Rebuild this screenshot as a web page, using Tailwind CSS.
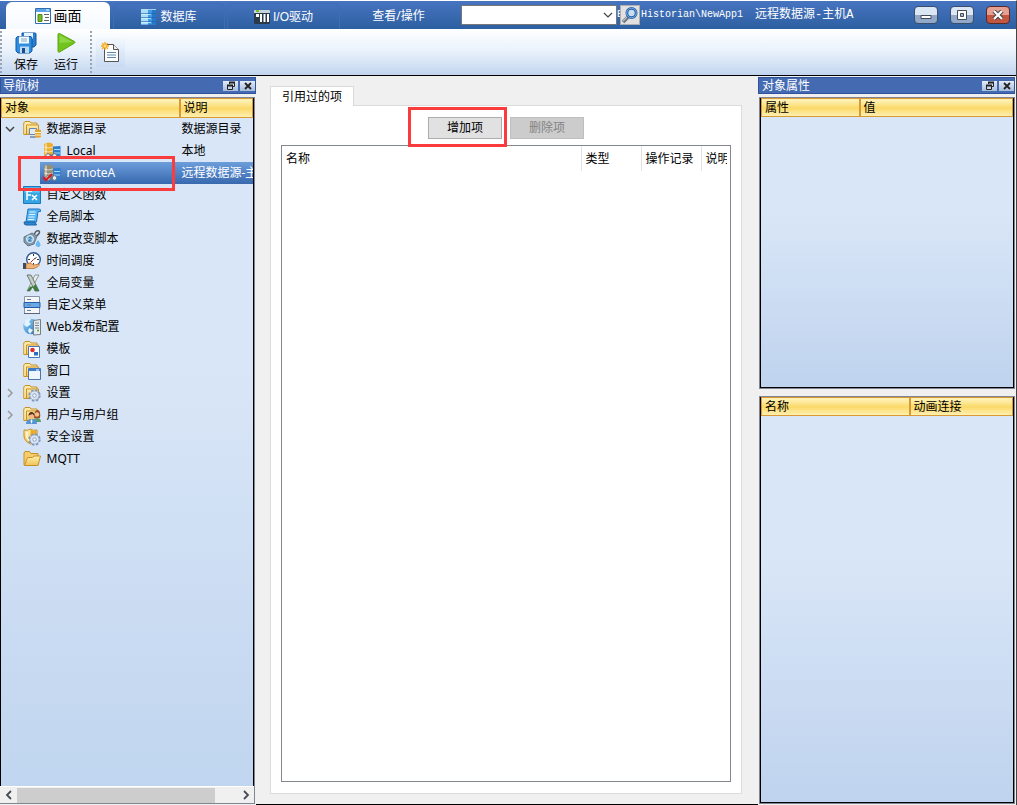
<!DOCTYPE html>
<html lang="zh-CN">
    <head>
        <meta charset="UTF-8" />
        <meta name="viewport" content="width=device-width, initial-scale=1.0" />
        <title>远程数据源-主机A</title>
        <script src="https://cdn.jsdelivr.net/npm/@tailwindcss/browser@4"></script>
    </head>
    <body
        class="flex h-screen flex-col overflow-hidden border-t border-r border-t-white border-r-[#444] bg-[#f0f0f0] font-['Noto_Sans','Noto_Sans_CJK_SC',sans-serif] text-[12px] leading-4 text-black"
    >
        <!-- shared icon shapes -->
        <svg class="absolute size-0" aria-hidden="true">
            <defs>
                <linearGradient id="gold" x1="0" y1="0" x2="0" y2="1">
                    <stop offset="0" stop-color="#fff0b0" />
                    <stop offset="1" stop-color="#efc452" />
                </linearGradient>
                <linearGradient id="blue" x1="0" y1="0" x2="1" y2="1">
                    <stop offset="0" stop-color="#9bdcff" />
                    <stop offset="1" stop-color="#1769b8" />
                </linearGradient>
                <symbol id="folder" viewBox="0 0 18 18">
                    <path d="M.8 14.500V3l1.200-1.500h5L8 3h6v11.500z" fill="url(#gold)" stroke="#c8902a" />
                    <path d="M3.500 5h12v9.500h-12z" fill="url(#gold)" stroke="#c8902a" />
                    <path d="M2 14V4" fill="none" stroke="#fff3c4" />
                </symbol>
                <symbol id="gear" viewBox="0 0 12 12">
                    <circle cx="6" cy="6" r="4.700" fill="none" stroke="#7f97bb" stroke-width="2" stroke-dasharray="2.200 1.490" />
                    <circle cx="6" cy="6" r="4.200" fill="#dbe6f4" stroke="#93a9c8" stroke-width=".8" />
                    <circle cx="6" cy="6" r="1.600" fill="#fff" stroke="#7c94b8" stroke-width=".8" />
                </symbol>
                <symbol id="servers" viewBox="0 0 18 18">
                    <path d="M9 4.500l8.500-.5v12.500l-8.500.5z" fill="#2b7fce" />
                    <path d="M11 7.500h6M11 11h6" stroke="#a9dcff" />
                    <path d="M1 2q4.500-3 9 0v12.500q-4.500 2.500-9 0z" fill="currentColor" />
                    <path d="M3 1.500v12" stroke="#fff" stroke-opacity=".45" stroke-width="2" />
                    <path d="M1 5q4.500 2 9 0M1 9q4.500 2 9 0" fill="none" stroke="#fff" stroke-opacity=".6" />
                    <path d="M5 13.500h7" stroke="#667" stroke-width="2" />
                    <circle cx="5" cy="14" r="2.300" fill="#eee" stroke="#667788" />
                    <circle cx="11.500" cy="14" r="2.300" fill="#eee" stroke="#667788" />
                </symbol>
                <symbol id="restore" viewBox="0 0 10 10">
                    <path d="M3.500 3V1.500h5v4H7" fill="none" stroke="#222" />
                    <path d="M3 1.500h6" stroke="#222" stroke-width="2" />
                    <path d="M1.500 4.500h5v4h-5z" fill="#c6d4e8" stroke="#222" />
                    <path d="M1 4.500h6" stroke="#222" stroke-width="2" />
                </symbol>
                <symbol id="cross" viewBox="0 0 10 10">
                    <path d="M2 2l6 6M8 2L2 8" stroke="#222" stroke-width="1.800" />
                </symbol>
            </defs>
        </svg>

        <header class="flex h-7 shrink-0 items-center bg-linear-to-b from-[#4774c0] to-[#2c5fa1] pl-1.5 text-white">
            <nav class="flex h-full items-end">
                <button class="flex h-[27px] w-[104px] items-center justify-center gap-[3px] rounded-t-md bg-linear-to-b from-white to-[#f6faff] text-[14px] text-black">
                    <svg class="size-4" viewBox="0 0 16 16">
                        <path d="M.5 .5h15v15H.5z" fill="#fff" stroke="#2f6eb3" />
                        <path d="M1 1h14v3H1z" fill="#5ba3e6" />
                        <path d="M11 2h3" stroke="#fff" />
                        <path d="M3 6.500h4v7H3z" fill="#79b829" stroke="#4d8a18" />
                        <path d="M9 6.500h5M10 9.500h4M9 12.500h5" stroke="#666" />
                    </svg>
                    画面
                </button>
                <button class="ml-[3px] flex h-[26px] w-[112px] items-center justify-center gap-1 rounded-t-md border border-b-0 border-[#3e6db5]">
                    <svg class="h-4 w-[15px]" viewBox="0 0 15 16">
                        <path d="M0 1h15v14.500H0z" fill="#3d9be8" />
                        <path d="M0 .5h7v15H0z" fill="#a8defa" />
                        <path d="M11 .5h4v15h-4z" fill="#2678c8" />
                        <path d="M0 4.500h15M0 8.500h15M0 12.500h15" stroke="#1d5fa6" stroke-opacity=".6" />
                        <path d="M0 .5h15M0 5.500h10M0 9.500h10M0 13.500h10" stroke="#d9f2ff" stroke-opacity=".7" />
                    </svg>
                    数据库
                </button>
                <button class="ml-0.5 flex h-[26px] w-[113px] items-center justify-center gap-[3px] rounded-t-md border border-b-0 border-[#3e6db5] font-['Liberation_Sans','Noto_Sans_CJK_SC',sans-serif]">
                    <svg class="size-4" viewBox="0 0 16 16">
                        <rect y="1" width="16" height="14" rx="1.500" fill="#2b3a49" />
                        <path d="M0 2q0-1 1-1h14q1 0 1 1v2H0z" fill="#c8d4dc" />
                        <path d="M2 2h3" stroke="#7bc21e" stroke-width="2" />
                        <path d="M6 5h2v8H6zM9.500 5h2v8h-2zM13 5h2v8h-2zM2 5h3v3H2z" fill="#fff" />
                    </svg>
                    I/O驱动
                </button>
                <button class="h-[26px] w-[121px] pr-1 text-center">查看/操作</button>
            </nav>

            <div class="relative flex w-[156px]">
                <select aria-label="查看/操作" class="h-5 w-full appearance-none border border-[#777] bg-white text-black"></select>
                <svg class="pointer-events-none absolute top-[7px] right-1 h-[6px] w-2.5" viewBox="0 0 10 6">
                    <path d="M1 1l4 4 4-4" fill="none" stroke="#444" stroke-width="1.200" />
                </svg>
            </div>
            <span class="w-[3px] overflow-hidden font-['Liberation_Mono',monospace] text-[10px]">E</span>
            <button aria-label="查找" class="size-5 border border-[#adadad] bg-[#e1e1e1]">
                <svg class="size-[18px]" viewBox="0 0 18 18">
                    <path d="M7 11l-5 5" stroke="#69737c" stroke-width="3.500" />
                    <path d="M6.500 10.500L2 15" stroke="#b5bec6" stroke-width="1.200" />
                    <circle cx="10.500" cy="7" r="4.600" fill="#c8def2" stroke="#2863a8" stroke-width="2.800" />
                    <circle cx="10.500" cy="7" r="4.800" fill="none" stroke="#76aade" stroke-width="1" />
                </svg>
            </button>
            <p class="ml-px flex flex-1 items-center whitespace-nowrap">
                <span class="font-['Liberation_Mono',monospace] text-[10px]">Historian\NewApp1</span>
                <span class="ml-3 font-['Liberation_Mono','Noto_Sans_CJK_SC',monospace]">远程数据源-主机A</span>
            </p>

            <div class="flex gap-3 pr-1.5">
                <button aria-label="最小化" class="flex h-[18px] w-6 items-center justify-center rounded-sm border border-[#3b4f6c] bg-linear-to-b from-[#dce7f5] from-50% to-[#91a8c8] to-50%">
                    <svg class="h-2 w-3" viewBox="0 0 12 8"><path d="M1 4.500h10v3H1z" fill="#fff" stroke="#444b55" /></svg>
                </button>
                <button aria-label="最大化" class="flex h-[18px] w-6 items-center justify-center rounded-sm border border-[#3b4f6c] bg-linear-to-b from-[#dce7f5] from-50% to-[#91a8c8] to-50%">
                    <svg class="h-2.5 w-3" viewBox="0 0 12 10"><path d="M1.500 .5h9v9h-9z" fill="#fff" stroke="#444b55" /><path d="M4.500 3.500h3v3h-3z" fill="#a4b5cd" stroke="#444b55" /></svg>
                </button>
                <button aria-label="关闭" class="flex h-[18px] w-6 items-center justify-center rounded-sm border border-[#5d2925] bg-linear-to-b from-[#e5a092] from-50% to-[#c4553f] to-50%">
                    <svg class="h-2.5 w-3" viewBox="0 0 12 10">
                        <path d="M2 1l8 8M10 1L2 9" stroke="#46424a" stroke-width="4.200" />
                        <path d="M2 1l8 8M10 1L2 9" stroke="#fff" stroke-width="2.200" />
                    </svg>
                </button>
            </div>
        </header>

        <div class="flex h-[47px] shrink-0 items-center border-b border-black bg-linear-to-b from-white via-[#e8f1fb] to-[#c2d5ef]">
            <span class="h-[42px] border-l-2 border-dotted border-[#99a3b1]"></span>
            <button class="ml-2.5 flex w-7 flex-col items-center gap-[3px]">
                <svg class="size-[22px]" viewBox="0 0 22 22">
                    <path d="M7 1h13q1 0 1 1v11l-2 2H7z" fill="#2a80d0" stroke="#1556a0" />
                    <path d="M9 1h9v6H9z" fill="#e7f3fc" />
                    <path d="M1 6l1.500-1.500H16L17 6v13l-2 2H3l-2-2z" fill="#2f8ee0" stroke="#1556a0" />
                    <path d="M4 4.500h10v7H4z" fill="#f4f9fe" />
                    <path d="M6 7h6M6 9h6" stroke="#86a9c8" />
                    <path d="M5 14.500h9V21H5z" fill="#bcdaf3" />
                    <path d="M7 16h3v5H7z" fill="#184c8a" />
                </svg>
                保存
            </button>
            <button class="ml-3 flex w-7 flex-col items-center gap-[3px]">
                <svg class="size-[22px]" viewBox="0 0 22 22">
                    <path d="M3 2.500q0-1.500 1.500-1l15 8q1 .8 0 1.600l-15 9q-1.500.5-1.500-1z" fill="#71c41d" stroke="#5aa60f" />
                    <path d="M4.500 3v8l13-1z" fill="#8fd544" />
                </svg>
                运行
            </button>
            <span class="ml-2.5 h-[42px] border-l-2 border-dotted border-[#99a3b1]"></span>
            <button aria-label="新建" class="ml-1 flex size-[29px] items-center justify-center bg-linear-to-b from-[#f3f8fe] to-[#c9dbf3]">
                <svg class="size-5" viewBox="0 0 20 20">
                    <path d="M3.500 2.500h9l5 5v12h-14z" fill="#fff" stroke="#555" />
                    <path d="M12.500 2.500v5h5" fill="#eee" stroke="#555" />
                    <path d="M6 10.500h9M6 13h9M6 15.500h9" stroke="#5b87b0" />
                    <path d="M4 0v8M0 4h8M1.200 1.200l5.600 5.600M6.800 1.200L1.200 6.800" stroke="#f2a51d" stroke-width="1.300" />
                    <circle cx="4" cy="4" r="1.500" fill="#ffe36e" />
                </svg>
            </button>
        </div>

        <main class="flex min-h-0 flex-1">
            <!-- navigation tree -->
            <aside class="flex w-64 shrink-0 flex-col">
                <div class="mt-px flex h-[17px] items-center gap-0.5 border border-[#2f539c] bg-[#446bb2] pl-0.5 text-white">
                    <h2 class="flex-1">导航树</h2>
                    <button aria-label="浮动" class="flex h-2.5 w-[15px] items-center justify-center bg-linear-to-b from-[#e3ebf7] to-[#a9bddb]"><svg class="size-2.5"><use href="#restore" /></svg></button>
                    <button aria-label="关闭" class="flex h-2.5 w-[15px] items-center justify-center bg-linear-to-b from-[#e3ebf7] to-[#a9bddb]"><svg class="size-2.5"><use href="#cross" /></svg></button>
                </div>
                <div class="relative mt-[3px] mr-px mb-px flex min-h-0 flex-1 flex-col border-t border-r border-b border-[#7f8592]">
                    <div class="min-h-0 flex-1 overflow-hidden border-r border-l border-black bg-linear-to-b from-[#d9e6f7] from-40% to-[#c0d5ef]">
                        <table class="w-full table-fixed border-collapse whitespace-nowrap">
                            <thead>
                                <tr class="h-[19px] border border-[#d99a35] bg-linear-to-b from-[#fff3b8] via-[#fbd967] to-[#fff0b0] text-left">
                                    <th class="w-[178px] border-r-2 border-[#d99a35] pl-[3px] font-normal">对象</th>
                                    <th class="pl-[3px] font-normal">说明</th>
                                </tr>
                            </thead>
                            <tbody>
                                <tr class="h-[22px]">
                                    <td>
                                        <div class="flex items-center pl-[3px]">
                                            <svg class="h-1.5 w-2.5" viewBox="0 0 10 6"><path d="M1 1l4 4 4-4" fill="none" stroke="#444" stroke-width="1.500" /></svg>
                                            <svg class="mr-1.5 ml-2 size-[18px]" viewBox="0 0 18 18">
                                                <use href="#folder" />
                                                <path d="M6.500 8.500h7v6h-7z" fill="#dcebf9" stroke="#6b87ad" />
                                                <path d="M7 17h6" stroke="#6b87ad" stroke-width="1.500" />
                                                <path d="M12 10q3-1.500 6 0v7q-3 1.500-6 0z" fill="#e5a52d" />
                                                <path d="M12 12.500h6M12 15h6" stroke="#fff0b8" />
                                            </svg>
                                            数据源目录
                                        </div>
                                    </td>
                                    <td class="pl-0.5">数据源目录</td>
                                </tr>
                                <tr class="h-[22px]">
                                    <td>
                                        <div class="flex items-center gap-1.5 pl-[41px]">
                                            <svg class="size-[18px] text-[#edae2e]"><use href="#servers" /></svg>
                                            Local
                                        </div>
                                    </td>
                                    <td class="pl-0.5">本地</td>
                                </tr>
                                <tr class="h-[22px] text-white">
                                    <td>
                                        <div class="ml-[38px] flex h-[22px] items-center gap-1.5 bg-linear-to-b from-[#6d9edb] to-[#3868ae] pl-[3px]">
                                            <svg class="size-[18px] text-[#968e72]" viewBox="0 0 18 18">
                                                <use href="#servers" />
                                                <path d="M0 13l3 3 6-6" fill="none" stroke="#e0161b" stroke-width="2" />
                                            </svg>
                                            remoteA
                                        </div>
                                    </td>
                                    <td class="overflow-hidden bg-linear-to-b from-[#6d9edb] to-[#3868ae] pl-0.5">远程数据源-主机A</td>
                                </tr>
                                <tr class="h-[22px]">
                                    <td colspan="2">
                                        <div class="flex items-center gap-1.5 pl-[21px]">
                                            <svg class="size-[18px]" viewBox="0 0 18 18">
                                                <path d="M.5 .5h17v17H.5z" fill="#35a5e3" stroke="#1a78bd" />
                                                <path d="M1.500 1.500h15v5h-15z" fill="#6cc6f3" />
                                                <path d="M4 14V5h5M4 9h4M9 9l5 5M14 9l-5 5" fill="none" stroke="#fff" stroke-width="1.500" />
                                            </svg>
                                            自定义函数
                                        </div>
                                    </td>
                                </tr>
                                <tr class="h-[22px]">
                                    <td colspan="2">
                                        <div class="flex items-center gap-1.5 pl-[21px]">
                                            <svg class="size-[18px]" viewBox="0 0 18 18">
                                                <path d="M5 1h11q2 0 1.500 2.500H15L13.500 14H3z" fill="#59b6f2" stroke="#1d73bf" />
                                                <path d="M1 14h11l1.500 3H3q-2 0-2-3z" fill="#2b86d1" stroke="#1d63a6" />
                                                <path d="M6.500 4h6M6 6.500h6M5.500 9h6M5 11.500h6" stroke="#e0f4ff" />
                                            </svg>
                                            全局脚本
                                        </div>
                                    </td>
                                </tr>
                                <tr class="h-[22px]">
                                    <td colspan="2">
                                        <div class="flex items-center gap-1.5 pl-[21px]">
                                            <svg class="size-[18px]" viewBox="0 0 18 18">
                                                <path d="M11 6q1-6 5-5 2 2-4 6" fill="none" stroke="#555f69" stroke-width="1.500" />
                                                <path d="M1 7l8-4 5 3-3 8-6 2-4-4z" fill="#8398ab" stroke="#647789" />
                                                <circle cx="7" cy="9" r="3.500" fill="#8cc7eb" stroke="#e7eef4" />
                                                <path d="M5.500 8q2-2 3 0l-3 3h3" fill="none" stroke="#27689f" />
                                                <path d="M15 10q3 4 2.500 5.500-2 3-5 0Q12.500 13 15 10z" fill="#69bbf0" />
                                            </svg>
                                            数据改变脚本
                                        </div>
                                    </td>
                                </tr>
                                <tr class="h-[22px]">
                                    <td colspan="2">
                                        <div class="flex items-center gap-1.5 pl-[21px]">
                                            <svg class="size-[18px]" viewBox="0 0 18 18">
                                                <circle cx="10.500" cy="7.500" r="6.800" fill="#fff" stroke="#305896" stroke-width="1.400" />
                                                <path d="M10.500 2v2M10.500 11v2M5 7.500h2M14 7.500h2M10.500 7.500l3-2" stroke="#333" />
                                                <path d="M10.500 7.500l-3 3" stroke="#d22" />
                                                <path d="M3 12l4-1 4 2 5-1q1 1-1 2.500l-4 2H3z" fill="#efb47b" stroke="#b87437" stroke-width=".8" />
                                                <path d="M0 11h3v6H0z" fill="#414b59" />
                                            </svg>
                                            时间调度
                                        </div>
                                    </td>
                                </tr>
                                <tr class="h-[22px]">
                                    <td colspan="2">
                                        <div class="flex items-center gap-1.5 pl-[21px]">
                                            <svg class="size-[18px]" viewBox="0 0 18 18">
                                                <path d="M16 1l-9 16H4l8-16z" fill="#e9eeec" stroke="#7b8580" stroke-width=".8" />
                                                <path d="M4 1h4l8 16h-4z" fill="#c5cfca" stroke="#56605a" stroke-width=".8" />
                                                <path d="M12.500 10l3.500 7h-4l-2-4zM7 12.500h5L9 14l-2 3H4z" fill="#3d7c3b" />
                                            </svg>
                                            全局变量
                                        </div>
                                    </td>
                                </tr>
                                <tr class="h-[22px]">
                                    <td colspan="2">
                                        <div class="flex items-center gap-1.5 pl-[21px]">
                                            <svg class="size-[18px]" viewBox="0 0 18 18">
                                                <path d="M1.500 .5h15v17h-15z" fill="#f4f6f8" stroke="#8995a5" />
                                                <path d="M1 6.500h16v5H1z" fill="#69a9e5" stroke="#255ca5" />
                                                <path d="M4 3.500h4M4 9h4M4 14.500h4" stroke="#667b98" />
                                                <path d="M1 17.500h16" stroke="#59677c" />
                                            </svg>
                                            自定义菜单
                                        </div>
                                    </td>
                                </tr>
                                <tr class="h-[22px]">
                                    <td colspan="2">
                                        <div class="flex items-center gap-1.5 pl-[21px]">
                                            <svg class="size-[18px]" viewBox="0 0 18 18">
                                                <circle cx="8" cy="8.500" r="7.800" fill="url(#blue)" />
                                                <path d="M2 3q3-3 6-2L6 4l2 2-4 3-3-2zM6 10l4 2-3 4-2-3z" fill="#e2f4fd" />
                                                <path d="M10.500 2.500l7-1v15l-7 .5z" fill="#e9ecee" stroke="#737e88" />
                                                <path d="M12 5h4M12 7.500h4M12 10h4" stroke="#78848f" />
                                                <path d="M14 12.500h2" stroke="#50a52b" stroke-width="1.500" />
                                            </svg>
                                            Web发布配置
                                        </div>
                                    </td>
                                </tr>
                                <tr class="h-[22px]">
                                    <td colspan="2">
                                        <div class="flex items-center gap-1.5 pl-[21px]">
                                            <svg class="size-[18px]" viewBox="0 0 18 18">
                                                <use href="#folder" />
                                                <path d="M5.500 6.500h11v11h-11z" fill="#fff" stroke="#4579b8" />
                                                <circle cx="9.500" cy="10" r="2.300" fill="#dc2f2f" />
                                                <path d="M11 12h4v3.500h-4z" fill="#2e6bc2" />
                                            </svg>
                                            模板
                                        </div>
                                    </td>
                                </tr>
                                <tr class="h-[22px]">
                                    <td colspan="2">
                                        <div class="flex items-center gap-1.5 pl-[21px]">
                                            <svg class="size-[18px]" viewBox="0 0 18 18">
                                                <use href="#folder" />
                                                <path d="M5.500 6.500h12v11h-12z" fill="#eef5fd" stroke="#4a76ad" />
                                                <path d="M5.500 6.500h12V9h-12z" fill="#3d7fce" />
                                                <path d="M13 8h3" stroke="#fff" />
                                            </svg>
                                            窗口
                                        </div>
                                    </td>
                                </tr>
                                <tr class="h-[22px]">
                                    <td colspan="2">
                                        <div class="flex items-center pl-[3px]">
                                            <svg class="h-2.5 w-2.5" viewBox="0 0 10 10"><path d="M3 1l4 4-4 4" fill="none" stroke="#999" stroke-width="1.500" /></svg>
                                            <svg class="mr-1.5 ml-2 size-[18px]" viewBox="0 0 18 18">
                                                <use href="#folder" />
                                                <use href="#gear" x="5" y="5" width="13" height="13" />
                                            </svg>
                                            设置
                                        </div>
                                    </td>
                                </tr>
                                <tr class="h-[22px]">
                                    <td colspan="2">
                                        <div class="flex items-center pl-[3px]">
                                            <svg class="h-2.5 w-2.5" viewBox="0 0 10 10"><path d="M3 1l4 4-4 4" fill="none" stroke="#999" stroke-width="1.500" /></svg>
                                            <svg class="mr-1.5 ml-2 size-[18px]" viewBox="0 0 18 18">
                                                <use href="#folder" />
                                                <path d="M10 16q0-4 4-4t4 4z" fill="#5e9c78" />
                                                <path d="M11 12q0-8 3.500-8T17 12z" fill="#9c4c22" />
                                                <circle cx="14" cy="8.500" r="2.200" fill="#f2c093" />
                                                <path d="M3 18q0-5 5.500-5t5.500 5z" fill="#5595d3" />
                                                <circle cx="8.500" cy="10" r="2.800" fill="#f2b985" />
                                                <path d="M5.500 10q0-4 3-4t3 4l-2-2-3 1z" fill="#5a3019" />
                                                <path d="M8.500 13l-1 2 1 3 1-3z" fill="#fff" />
                                            </svg>
                                            用户与用户组
                                        </div>
                                    </td>
                                </tr>
                                <tr class="h-[22px]">
                                    <td colspan="2">
                                        <div class="flex items-center gap-1.5 pl-[21px]">
                                            <svg class="size-[18px]" viewBox="0 0 18 18">
                                                <path d="M1 2q4 1 6.500-1Q10 3 14 2v6q-1 5-6.500 8Q1 13 1 8z" fill="url(#gold)" stroke="#c88d23" />
                                                <path d="M7.500 1.500v14Q13 12 13.500 8V3q-4 0-6-1.500z" fill="#e9ac2b" />
                                                <path d="M4 4v5q1 3 3 4" fill="none" stroke="#fff8d5" stroke-width="1.500" />
                                                <use href="#gear" x="5" y="5" width="13" height="13" />
                                            </svg>
                                            安全设置
                                        </div>
                                    </td>
                                </tr>
                                <tr class="h-[22px]">
                                    <td colspan="2">
                                        <div class="flex items-center gap-1.5 pl-[21px]">
                                            <svg class="size-[18px]" viewBox="0 0 18 18">
                                                <path d="M1 15V3l1-1.500h4.500L8 3.500h7v11.500z" fill="#f5ce6b" stroke="#c8902a" />
                                                <path d="M1.500 15.500l3-8h5l1.500-1.500h6.500l-2.500 9.500z" fill="url(#gold)" stroke="#c8902a" />
                                            </svg>
                                            MQTT
                                        </div>
                                    </td>
                                </tr>
                            </tbody>
                        </table>
                    </div>
                    <div class="flex h-[17px] shrink-0 items-center border-t border-white bg-[#f0f0f0]">
                        <button aria-label="向左滚动" class="flex w-[17px] justify-center">
                            <svg class="h-2.5 w-2.5" viewBox="0 0 10 10"><path d="M7 1L3 5l4 4" fill="none" stroke="#444c58" stroke-width="1.800" /></svg>
                        </button>
                        <div class="h-[15px] flex-1"><div class="h-full w-[90%] bg-[#cdcdcd]"></div></div>
                        <button aria-label="向右滚动" class="flex w-[17px] justify-center">
                            <svg class="h-2.5 w-2.5" viewBox="0 0 10 10"><path d="M3 1l4 4-4 4" fill="none" stroke="#444c58" stroke-width="1.800" /></svg>
                        </button>
                    </div>
                    <div class="pointer-events-none absolute top-[58px] left-[18px] h-[35px] w-[157px] border-3 border-[#fa3c3c]"></div>
                </div>
            </aside>

            <!-- referenced items -->
            <section class="flex min-w-0 flex-1 flex-col border-b border-black pt-2.5 pr-4 pb-2.5 pl-3.5">
                <button class="z-10 -mb-px h-5 w-[84px] border border-b-0 border-[#d9d9d9] bg-white">引用过的项</button>
                <div class="flex min-h-0 flex-1 flex-col border border-[#dcdcdc] bg-white px-2.5 pt-[11px] pb-[11px]">
                    <div class="flex justify-center gap-2 pb-1.5">
                        <div class="relative">
                            <button class="block h-[22px] w-[74px] border border-[#adadad] bg-[#e1e1e1]">增加项</button>
                            <div class="pointer-events-none absolute -top-2.5 -left-5 h-10 w-[99px] border-3 border-[#fa3c3c]"></div>
                        </div>
                        <button disabled class="h-[22px] w-[74px] border border-[#bfbfbf] bg-[#cccccc] text-[#838383]">删除项</button>
                    </div>
                    <div class="min-h-0 flex-1 border border-[#828790] pr-[3px]">
                        <table class="w-full table-fixed whitespace-nowrap text-left">
                            <thead>
                                <tr class="h-[25px]">
                                    <th class="border-r border-[#e2e2e2] pl-1 font-normal">名称</th>
                                    <th class="w-[60px] border-r border-[#e2e2e2] pl-1 font-normal">类型</th>
                                    <th class="w-[60px] border-r border-[#e2e2e2] pl-1 font-normal">操作记录</th>
                                    <th class="w-[26px] overflow-hidden pl-1 font-normal">说明</th>
                                </tr>
                            </thead>
                        </table>
                    </div>
                </div>
            </section>

            <!-- object properties -->
            <aside class="flex w-[258px] shrink-0 flex-col pr-px">
                <div class="mt-px flex h-[17px] shrink-0 items-center gap-0.5 border border-[#2f539c] bg-[#446bb2] pl-[3px] text-white">
                    <h2 class="flex-1">对象属性</h2>
                    <button aria-label="浮动" class="flex h-2.5 w-[15px] items-center justify-center bg-linear-to-b from-[#e3ebf7] to-[#a9bddb]"><svg class="size-2.5"><use href="#restore" /></svg></button>
                    <button aria-label="关闭" class="flex h-2.5 w-[15px] items-center justify-center bg-linear-to-b from-[#e3ebf7] to-[#a9bddb]"><svg class="size-2.5"><use href="#cross" /></svg></button>
                </div>
                <div class="mt-[3px] mb-px ml-px flex flex-1 flex-col gap-[7px]">
                    <div class="flex-5 border border-[#7f8592]">
                        <div class="h-full border border-t-0 border-black bg-linear-to-b from-[#d9e6f7] from-40% to-[#bfd3ee]">
                            <table class="w-full table-fixed border-collapse text-left">
                                <thead>
                                    <tr class="h-[18px] border border-[#d99a35] bg-linear-to-b from-[#fff3b8] via-[#fbd967] to-[#fff0b0]">
                                        <th class="w-[98px] border-r-2 border-[#d99a35] pl-[3px] font-normal">属性</th>
                                        <th class="pl-[3px] font-normal">值</th>
                                    </tr>
                                </thead>
                            </table>
                        </div>
                    </div>
                    <div class="flex-7 border border-[#7f8592]">
                        <div class="h-full border border-t-0 border-black bg-linear-to-b from-[#d9e6f7] from-40% to-[#bfd3ee]">
                            <table class="w-full table-fixed border-collapse text-left">
                                <thead>
                                    <tr class="h-[18px] border border-[#d99a35] bg-linear-to-b from-[#fff3b8] via-[#fbd967] to-[#fff0b0]">
                                        <th class="w-[148px] border-r-2 border-[#d99a35] pl-[3px] font-normal">名称</th>
                                        <th class="pl-[3px] font-normal">动画连接</th>
                                    </tr>
                                </thead>
                            </table>
                        </div>
                    </div>
                </div>
            </aside>
        </main>
    </body>
</html>
